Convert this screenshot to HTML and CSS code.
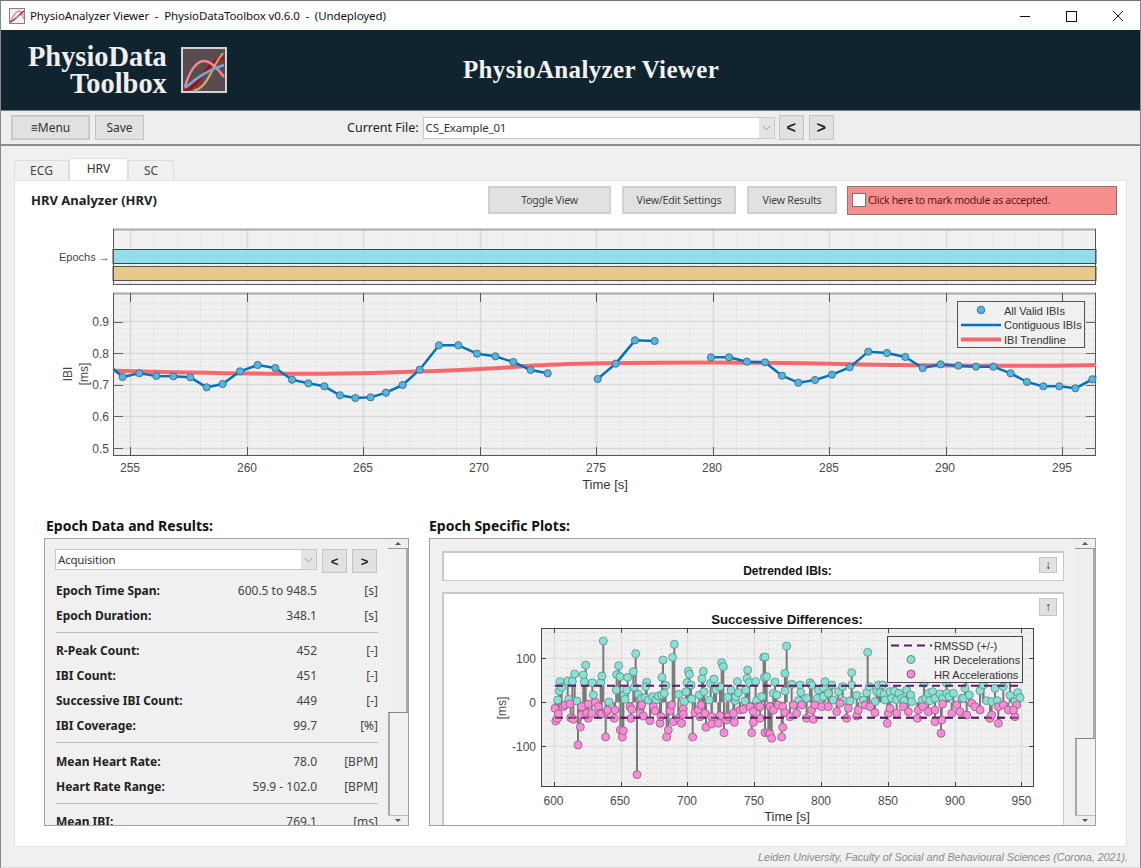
FILE: index.html
```html
<!DOCTYPE html>
<html lang="en">
<head>
<meta charset="utf-8">
<title>PhysioAnalyzer Viewer</title>
<link rel="stylesheet" href="styles.css">
</head>
<body>
<div class="window">
  <div class="titlebar">
    <svg class="appicon" viewBox="0 0 16 16"><rect x=".5" y=".5" width="15" height="15" fill="#f4f0f0" stroke="#8a7f80"/><path d="M1 14C4 8 7 3 10 3s3 5 5 8" fill="none" stroke="#f08a8a" stroke-width="1.3"/><path d="M1 14c5-1 9-8 14-11" fill="none" stroke="#c00" stroke-width="1.3"/><path d="M2 13c4-3 8-6 13-7" fill="none" stroke="#6fa8dc" stroke-width="1.1"/></svg>
    <span class="titletext">PhysioAnalyzer Viewer &nbsp;-&nbsp; PhysioDataToolbox v0.6.0 &nbsp;-&nbsp; (Undeployed)</span>
    <div class="winctrls">
      <svg class="winbtn" viewBox="0 0 46 30"><path d="M17 15.5h10" stroke="#111" fill="none"/></svg>
      <svg class="winbtn" viewBox="0 0 46 30"><rect x="17.5" y="10.5" width="10" height="10" stroke="#111" fill="none"/></svg>
      <svg class="winbtn" viewBox="0 0 46 30"><path d="M18 10l10 10M28 10L18 20" stroke="#111" fill="none"/></svg>
    </div>
  </div>

  <header class="banner">
    <div class="logo">
      <div class="logotext"><span>PhysioData</span><span>Toolbox</span></div>
      <svg class="logoicon" viewBox="0 0 46 46">
        <rect x="1" y="1" width="44" height="44" fill="#5a4b50" stroke="#d2d2d2" stroke-width="2"/>
        <path d="M4 43c12-3 16-14 22-21 5-6 10-10 17-11" fill="none" stroke="#c00000" stroke-width="2.6"/>
        <path d="M12 44c8-1 13-8 18-18 4-9 8-15 12-20" fill="none" stroke="#d9a860" stroke-width="2"/>
        <path d="M4 40C8 25 15 14 23 14c7 0 14 8 20 16" fill="none" stroke="#f28a8a" stroke-width="2.4"/>
        <path d="M4 41c10-9 22-18 39-23" fill="none" stroke="#6fa8dc" stroke-width="2.6"/>
      </svg>
    </div>
    <h1 class="apptitle">PhysioAnalyzer Viewer</h1>
  </header>

  <div class="toolbar">
    <button class="btn btn-menu">≡Menu</button>
    <button class="btn btn-save">Save</button>
    <span class="filelabel">Current File:</span>
    <div class="combo combo-file"><span class="combotext">CS_Example_01</span><span class="comboarrow"><svg viewBox="0 0 10 6"><path d="M1 1l4 4 4-4" fill="none" stroke="#888"/></svg></span></div>
    <button class="btn btn-nav">&lt;</button>
    <button class="btn btn-nav">&gt;</button>
  </div>

  <main class="main">
    <div class="tabs">
      <span class="tab">ECG</span>
      <span class="tab tab-active">HRV</span>
      <span class="tab tab-last">SC</span>
    </div>
    <section class="tabpanel">
      <div class="modulehead">
        <h2 class="moduletitle">HRV Analyzer (HRV)</h2>
        <button class="btn btn-head btn-toggle">Toggle View</button>
        <button class="btn btn-head btn-settings">View/Edit Settings</button>
        <button class="btn btn-head btn-results">View Results</button>
        <label class="accept"><span class="checkbox"></span>Click here to mark module as accepted.</label>
      </div>

      <svg class="mainchart" id="mainchart" viewBox="15 220 1111 280">
        <text class="lbl-small" x="59" y="261">Epochs →</text>
        <g id="ep-grid"></g>
        <rect x="113" y="249.5" width="983" height="14" fill="#8adce9" fill-opacity=".95" stroke="#444"/>
        <rect x="113" y="266.5" width="983" height="14" fill="#e5cb87" stroke="#555"/>
        <path d="M113 229.5H1096" stroke="#aaa" stroke-width="2"/>
        <path d="M113.5 229V285M1095.5 229V285M113 284.5H1096" stroke="#555" fill="none"/>

        <rect x="113" y="293" width="983" height="163" fill="#f0f0f0"/>
        <g id="main-grid"></g>
        <path d="M113 293.5H1096" stroke="#a8a8a8" stroke-width="2"/>
        <path d="M113.5 293V456M1095.5 293V456M113 455.5H1096" stroke="#555" fill="none"/>
        <g id="main-ticks"></g>
        <path id="trend" fill="none" stroke="#f46a6c" stroke-width="4"/>
        <g id="ibi"></g>

        <g class="ticklbl" text-anchor="end">
          <text x="109" y="326">0.9</text><text x="109" y="358">0.8</text><text x="109" y="389">0.7</text><text x="109" y="421">0.6</text><text x="109" y="453">0.5</text>
        </g>
        <g class="ticklbl" text-anchor="middle">
          <text x="130" y="472">255</text><text x="247" y="472">260</text><text x="363" y="472">265</text><text x="479" y="472">270</text><text x="596" y="472">275</text><text x="712" y="472">280</text><text x="829" y="472">285</text><text x="945" y="472">290</text><text x="1062" y="472">295</text>
        </g>
        <text class="axlbl" text-anchor="middle" x="605" y="489">Time [s]</text>
        <text class="ticklbl" text-anchor="middle" transform="translate(72 374) rotate(-90)">IBI</text>
        <text class="ticklbl" text-anchor="middle" transform="translate(88 374) rotate(-90)">[ms]</text>

        <g class="legend">
          <rect x="957.5" y="301.5" width="127" height="46" fill="#f0f0f0" stroke="#555"/>
          <circle cx="981" cy="310" r="3.8" fill="#4fb8e2" stroke="#4d7186"/>
          <path d="M961 325h40" stroke="#0072bd" stroke-width="2.5"/>
          <path d="M961 339.5h40" stroke="#f46a6c" stroke-width="4"/>
          <text x="1004" y="315">All Valid IBIs</text>
          <text x="1004" y="329">Contiguous IBIs</text>
          <text x="1004" y="344">IBI Trendline</text>
        </g>
      </svg>

      <div class="lower">
        <div class="col col-left">
          <h3 class="sectitle">Epoch Data and Results:</h3>
          <div class="scrollbox box-left">
            <div class="scrollcontent content-left">
              <div class="epochctrl">
                <div class="combo combo-epoch"><span class="combotext">Acquisition</span><span class="comboarrow"><svg viewBox="0 0 10 6"><path d="M1 1l4 4 4-4" fill="none" stroke="#888"/></svg></span></div>
                <button class="btn btn-nav btn-small">&lt;</button>
                <button class="btn btn-nav btn-small">&gt;</button>
              </div>
              <div class="group">
                <div class="row"><b>Epoch Time Span:</b><span class="val">600.5 to 948.5</span><span class="unit">[s]</span></div>
                <div class="row"><b>Epoch Duration:</b><span class="val">348.1</span><span class="unit">[s]</span></div>
              </div>
              <div class="group group-wide">
                <div class="row"><b>R-Peak Count:</b><span class="val">452</span><span class="unit">[-]</span></div>
                <div class="row"><b>IBI Count:</b><span class="val">451</span><span class="unit">[-]</span></div>
                <div class="row"><b>Successive IBI Count:</b><span class="val">449</span><span class="unit">[-]</span></div>
                <div class="row"><b>IBI Coverage:</b><span class="val">99.7</span><span class="unit">[%]</span></div>
              </div>
              <div class="group">
                <div class="row"><b>Mean Heart Rate:</b><span class="val">78.0</span><span class="unit">[BPM]</span></div>
                <div class="row"><b>Heart Rate Range:</b><span class="val">59.9 - 102.0</span><span class="unit">[BPM]</span></div>
              </div>
              <div class="group">
                <div class="row"><b>Mean IBI:</b><span class="val">769.1</span><span class="unit">[ms]</span></div>
              </div>
            </div>
            <div class="scrollbar">
              <span class="sb-btn sb-up"></span>
              <span class="sb-thumb thumb-left"></span>
              <span class="sb-track"></span>
              <span class="sb-btn sb-down"></span>
            </div>
          </div>
        </div>

        <div class="col col-right">
          <h3 class="sectitle">Epoch Specific Plots:</h3>
          <div class="scrollbox box-right">
            <div class="scrollcontent content-right">
              <div class="plotpanel panel-collapsed">
                <span class="paneltitle">Detrended IBIs:</span>
                <button class="btn arrowbtn arrow-down">↓</button>
              </div>
              <div class="plotpanel panel-open">
                <button class="btn arrowbtn arrow-up">↑</button>
                <svg class="scatter" viewBox="444 594 620 233">
                  <text class="plottitle" text-anchor="middle" x="787" y="624">Successive Differences:</text>
                  <rect x="541" y="628" width="493" height="159" fill="#f0f0f0"/>
                  <g id="sc-grid"></g>
                  <path d="M541.5 628V787M1033.5 628V787M541 628.5H1034M541 786.5H1034" stroke="#444" fill="none"/>
                  <g id="sc-stems" stroke="#7a7a7a" stroke-width="2"></g>
                  <g id="sc-teal" fill="#86e2d4" stroke="#5f8a84" stroke-width=".8"></g>
                  <path d="M555 685.8H1019M555 717.8H1019" stroke="#5f1a68" stroke-width="2" stroke-dasharray="8 5"/>
                  <g id="sc-pink" fill="#fd8ad8" stroke="#84627a" stroke-width=".8"></g>
                  <path d="M555 717.8H1019" stroke="#5f1a68" stroke-width="2" stroke-dasharray="8 5" opacity=".7"/>
                  <g class="ticklbl" text-anchor="end">
                    <text x="536" y="663">100</text><text x="536" y="707">0</text><text x="536" y="751">-100</text>
                  </g>
                  <g class="ticklbl" text-anchor="middle">
                    <text x="553.5" y="805">600</text><text x="620" y="805">650</text><text x="687" y="805">700</text><text x="754" y="805">750</text><text x="821" y="805">800</text><text x="888" y="805">850</text><text x="955" y="805">900</text><text x="1021.5" y="805">950</text>
                  </g>
                  <text class="axlbl" text-anchor="middle" x="787" y="821">Time [s]</text>
                  <text class="ticklbl" text-anchor="middle" transform="translate(506 708) rotate(-90)">[ms]</text>
                  <g class="legend">
                    <rect x="887.5" y="636.5" width="135" height="46" fill="#f0f0f0" fill-opacity=".88" stroke="#444"/>
                    <path d="M891 645.5h41" stroke="#5f1a68" stroke-width="2" stroke-dasharray="8 5"/>
                    <circle cx="911" cy="659.5" r="4" fill="#86e2d4" stroke="#5f8a84"/>
                    <circle cx="911" cy="674" r="4" fill="#fd8ad8" stroke="#84627a"/>
                    <text x="934" y="649.5">RMSSD (+/-)</text>
                    <text x="934" y="664">HR Decelerations</text>
                    <text x="934" y="679">HR Accelerations</text>
                  </g>
                </svg>
              </div>
            </div>
            <div class="scrollbar">
              <span class="sb-btn sb-up"></span>
              <span class="sb-thumb thumb-right"></span>
              <span class="sb-track"></span>
              <span class="sb-btn sb-down"></span>
            </div>
          </div>
        </div>
      </div>
    </section>
  </main>
  <footer class="footer">Leiden University, Faculty of Social and Behavioural Sciences (Corona, 2021).</footer>
</div>
<script src="plots.js"></script>
</body>
</html>
```
FILE: styles.css
```css
* { box-sizing: border-box; }
html, body { margin: 0; padding: 0; }
body { background: #f0f0f0; font-family: "Noto Sans", "Liberation Sans", sans-serif; color: #222; }
.window { width: 1141px; height: 868px; display: flex; flex-direction: column; overflow: hidden; border-top: 1px solid #777; border-right: 1px solid #888; border-left: 1px solid #888; border-bottom: 1px solid #ddd; background: #f0f0f0; }

.titlebar { height: 29px; flex: none; background: #fff; display: flex; align-items: center; padding-left: 8px; }
.appicon { width: 16px; height: 16px; flex: none; }
.titletext { margin-left: 5px; font-size: 11.5px; letter-spacing: -.1px; color: #111; white-space: nowrap; }
.winctrls { margin-left: auto; display: flex; margin-right: -1px; }
.winbtn { width: 46px; height: 30px; display: block; }

.banner { height: 80px; flex: none; background: #10242f; display: flex; align-items: center; position: relative; }
.logo { display: flex; align-items: center; margin-left: 27px; }
.logotext { display: flex; flex-direction: column; align-items: flex-end; font: bold 28.4px/27px "Liberation Serif", serif; color: #efefef; }
.logoicon { width: 46px; height: 46px; margin-left: 14px; flex: none; }
.apptitle { margin: 0; position: absolute; left: 462px; top: 24px; font: bold 25px/32px "Liberation Serif", serif; color: #f2f2f2; letter-spacing: .35px; }

.toolbar { height: 36px; flex: none; background: #eee; border-top: 1px solid #777; border-bottom: 2px solid #8c8c8c; display: flex; align-items: center; padding: 0 0 0 10px; }
.btn { font-family: inherit; font-size: 12px; color: #333; background: #e1e1e1; border: 1px solid #c4c4c4; padding: 0; display: flex; align-items: center; justify-content: center; flex: none; }
.btn-menu { width: 79px; height: 25px; box-shadow: inset 0 0 0 1px #d0d0d0; }
.btn-save { width: 49px; height: 25px; margin-left: 5px; }
.filelabel { margin-left: 203px; font-size: 12.5px; color: #222; }
.combo { display: flex; background: #fff; border: 1px solid #c8c8c8; font-size: 11.5px; letter-spacing: -.2px; color: #333; flex: none; }
.combo-file { width: 352px; height: 22px; margin-left: 4px; }
.combotext { flex: 1; padding-left: 2px; line-height: 20px; white-space: nowrap; }
.comboarrow { width: 15px; background: #e4e4e4; display: flex; align-items: center; justify-content: center; }
.comboarrow svg { width: 9px; height: 6px; }
.btn-nav { width: 25px; height: 25px; margin-left: 5px; font-family: "Liberation Sans", sans-serif; font-weight: bold; font-size: 16px; color: #222; }
.combo-file + .btn-nav { margin-left: 4px; }

.main { flex: 1; min-height: 0; padding: 12px 13px 0 13px; display: flex; flex-direction: column; }
.tabs { display: flex; align-items: flex-end; height: 22px; flex: none; }
.tab { width: 55px; height: 20px; background: #f0f0f0; border: 1px solid #ddd; border-bottom: 0; font-size: 12px; color: #444; display: flex; align-items: center; justify-content: center; }
.tab-active { width: 59px; height: 22px; background: #fff; border-bottom: 0; color: #333; padding-bottom: 2px; }
.tab-last { width: 46px; }
.tabpanel { flex: 1; min-height: 0; background: #fff; border: 1px solid #e2e2e2; display: flex; flex-direction: column; }

.modulehead { height: 39px; flex: none; display: flex; align-items: center; padding: 0 9px 1px 16px; }
.moduletitle { margin: 0; font-size: 13px; font-weight: 700; color: #222; }
.btn-head { height: 28px; font-size: 10.5px; letter-spacing: -.2px; color: #444; border-width: 2px; border-color: #d2d2d2; }
.btn-toggle { width: 123px; margin-left: auto; }
.btn-settings { width: 114px; margin-left: 11px; }
.btn-results { width: 90px; margin-left: 11px; }
.accept { width: 270px; height: 29px; margin-left: 10px; background: #f68e8e; border: 1px solid #8a7474; display: flex; align-items: center; padding-left: 4px; font-size: 10.5px; letter-spacing: -.3px; color: #5c1515; white-space: nowrap; }
.checkbox { width: 14px; height: 14px; background: #fff; border: 1px solid #777; margin-right: 2px; flex: none; }

.mainchart { display: block; width: 1111px; height: 280px; flex: none; }
.lower { display: flex; padding: 0 0 0 29px; flex: none; }
.col { display: flex; flex-direction: column; flex: none; }
.col-left { width: 385px; }
.col-right { width: 667px; }
.sectitle { margin: 16px 0 0 2px; height: 22px; font-size: 14px; line-height: 20px; font-weight: 700; color: #111; }
.scrollbox { height: 288px; border: 1px solid #a0a0a0; background: #f0f0f0; display: flex; overflow: hidden; }
.box-left { width: 365px; }
.box-right { width: 667px; margin-left: 0; }
.col-right .sectitle { margin-left: 0; }
.scrollcontent { flex: 1; min-width: 0; overflow: hidden; }
.content-left { padding: 10px 10px 0 11px; }
.epochctrl { display: flex; align-items: flex-start; height: 29px; margin-left: -1px; }
.combo-epoch { width: 262px; height: 21px; }
.btn-small { font-size: 13px; height: 24px; }
.epochctrl .btn-small:first-of-type { margin-left: 5px; }
.group { border-bottom: 1px solid #bcbcbc; padding-bottom: 4px; margin-bottom: 5px; }
.group-wide { margin-bottom: 6px; }
.group:last-child { border-bottom: 0; }
.row { display: flex; height: 25px; align-items: center; font-size: 12px; color: #444; }
.row b { font-weight: 700; color: #222; white-space: nowrap; }
.val { margin-left: auto; white-space: nowrap; }
.unit { width: 61px; text-align: right; flex: none; }

.scrollbar { width: 20px; flex: none; display: flex; flex-direction: column; }
.sb-btn { height: 10px; flex: none; border-bottom: 1px solid #999; position: relative; background: #efefef; }
.sb-down { border-bottom: 0; border-top: 1px solid #bbb; }
.sb-btn::after { content: ""; position: absolute; left: 7px; top: 3px; border: 3px solid transparent; border-top: 0; border-bottom: 3px solid #555; }
.sb-down::after { border-bottom: 0; border-top: 3px solid #555; }
.sb-thumb { flex: none; border-right: 2px solid #aaa; border-bottom: 1px solid #888; background: #efefef; }
.sb-track { flex: 1; border-left: 2px solid #a8a8a8; background: #f1f1f1; }
.thumb-left { height: 164px; }
.thumb-right { height: 190px; }

.content-right { padding: 12px 12px 0 12px; }
.plotpanel { background: #fff; border: 2px solid #c8c8c8; border-right-width: 1px; border-bottom-width: 1px; width: 622px; position: relative; }
.panel-collapsed { height: 30px; margin-bottom: 11px; text-align: center; }
.panel-open { height: 260px; }
.paneltitle { position: absolute; left: 68px; right: 0; top: 11px; font: bold 12px/14px "Liberation Sans", sans-serif; color: #111; }
.arrowbtn { position: absolute; right: 6px; width: 18px; font-size: 12px; font-family: "Liberation Sans", sans-serif; color: #222; }
.arrow-down { top: 4px; height: 16px; }
.arrow-up { top: 4px; height: 18px; }
.scatter { display: block; width: 620px; height: 233px; }

.footer { flex: none; height: 20px; font: italic 10.7px/21px "Liberation Sans", sans-serif; color: #8b8b8b; text-align: right; padding-right: 12px; }

svg text { font-family: "Liberation Sans", sans-serif; }
.ticklbl text, text.ticklbl { font-size: 12px; fill: #4a4a4a; }
.axlbl { font-size: 13px; fill: #333; }
.lbl-small { font-size: 11px; fill: #444; }
.legend text { font-size: 11px; fill: #333; }
.plottitle { font-size: 13.2px; font-weight: bold; fill: #111; }
```
FILE: plots.js
```js
const NS = "http://www.w3.org/2000/svg";
function el(parent, tag, attrs) {
  const e = document.createElementNS(NS, tag);
  for (const k in attrs) e.setAttribute(k, attrs[k]);
  document.getElementById(parent).appendChild(e);
}
function line(parent, x1, y1, x2, y2, stroke, extra) {
  el(parent, "line", Object.assign({ x1, y1, x2, y2, stroke }, extra || {}));
}
const DOT = { "stroke-dasharray": "1 3" };
const MINOR = "#d0d0d0";
const SNAP = v => Math.round(v) + 0.5;

/* ---------- epoch strip ---------- */
const xs = s => 130 + (s - 255) * 23.3;
el("ep-grid", "rect", { x: 113, y: 229, width: 983, height: 56, fill: "#f0f0f0" });
for (let s = 255; s <= 296; s++) {
  const x = SNAP(xs(s));
  if (s % 5 === 0) line("ep-grid", x, 229, x, 285, "#d9d9d9", { "stroke-width": 1.5 });
  else line("ep-grid", x, 229, x, 285, MINOR, DOT);
}

/* ---------- main IBI plot ---------- */
const yv = v => 353 + (0.8 - v) * 315;
for (let v = 0.48; v <= 0.98; v += 0.02) {
  const y = SNAP(yv(v));
  const major = Math.abs(v * 10 - Math.round(v * 10)) < 0.01;
  if (major) line("main-grid", 113, y, 1096, y, "#dadada", { "stroke-width": 1.5 });
  else line("main-grid", 113, y, 1096, y, MINOR, DOT);
}
for (let s = 255; s <= 296; s++) {
  const x = SNAP(xs(s));
  if (s % 5 === 0) {
    line("main-grid", x, 293, x, 456, "#d9d9d9", { "stroke-width": 1.5 });
    line("main-ticks", x, 293, x, 302, "#555");
    line("main-ticks", x, 447, x, 456, "#555");
  } else line("main-grid", x, 293, x, 456, MINOR, DOT);
}
for (let v = 0.5; v <= 0.95; v += 0.1) {
  const y = SNAP(yv(v));
  line("main-ticks", 113, y, 123, y, "#666");
  line("main-ticks", 1086, y, 1096, y, "#666");
}
document.getElementById("trend").setAttribute("d",
  "M113 370.7C200 373 300 375 372 373S480 370 520 366.5 640 362.5 711 362.5 860 364.5 900 365 1040 366.5 1096 365");

const z3 = p => [40 + p[0] / 3, 220 + p[1] / 3];
const z4 = p => [420 + p[0] / 3, 280 + p[1] / 3];
const z5 = p => [800 + p[0] / 3, 280 + p[1] / 3];
const segA = [[220, 447], [248, 471], [298, 460], [349, 468], [400, 469], [451, 472], [500, 502], [548, 492], [600, 454], [653, 435], [706, 444], [756, 479], [805, 490], [853, 499], [900, 526], [946, 534], [992, 532], [1038, 518], [1088, 495], [1139, 449]].map(z3)
  .concat([[57, 196], [115, 196], [171, 221], [226, 229], [280, 246], [332, 270], [383, 280]].map(z4));
const segB = [[533, 297], [587, 251], [645, 181], [704, 183]].map(z4);
const segC = [[873, 232], [927, 232], [981, 245], [1035, 247], [1086, 287], [1135, 308]].map(z4)
  .concat([[45, 300], [96, 284], [149, 262], [205, 215], [261, 219], [316, 231], [368, 264], [422, 253], [475, 257], [528, 260], [580, 260], [632, 280], [681, 306], [730, 319], [778, 319], [826, 325], [877, 298]].map(z5));
[segA, segB, segC].forEach(seg => {
  const pts = seg.slice();
  if (seg === segC) pts.push([1096, 376]);
  el("ibi", "polyline", { points: pts.map(p => p.join(",")).join(" "), fill: "none", stroke: "#0072bd", "stroke-width": 2.5, "stroke-linejoin": "round" });
});
[segA, segB, segC].forEach(seg => seg.forEach((p, i) => {
  if (seg === segA && i === 0) return;
  el("ibi", "circle", { cx: p[0], cy: p[1], r: 3.6, fill: "#4fb8e2", stroke: "#4d7186", "stroke-width": 1 });
}));

/* ---------- successive differences ---------- */
const sx = t => 553.7 + (t - 600) * 1.3365;
const sy = v => 702.3 - v * 0.4415;
for (let t = 600; t <= 950; t += 10) {
  if (t % 50 === 0) continue;
  line("sc-grid", SNAP(sx(t)), 628, SNAP(sx(t)), 787, MINOR, DOT);
}
for (let v = -180; v <= 160; v += 20) {
  if (v % 100 === 0) continue;
  line("sc-grid", 541, SNAP(sy(v)), 1034, SNAP(sy(v)), MINOR, DOT);
}
for (let t = 600; t <= 950; t += 50) {
  const x = SNAP(sx(t));
  line("sc-grid", x, 628, x, 787, "#dedede", { "stroke-width": 1.5 });
  line("sc-grid", x, 628, x, 633, "#444");
  line("sc-grid", x, 782, x, 787, "#444");
}
[-100, 0, 100].forEach(v => {
  const y = SNAP(sy(v));
  line("sc-grid", 541, y, 1034, y, "#dedede", { "stroke-width": 1.5 });
  line("sc-grid", 541, y, 546, y, "#444");
  line("sc-grid", 1029, y, 1034, y, "#444");
});

const z7 = p => [425 + p[0] / 3, 510 + p[1] / 3];
const z8 = p => [760 + p[0] / 3, 510 + p[1] / 3];
const teal = [[398,570],[405,515],[403,543],[410,532],[428,513],[431,568],[442,514],[449,492],[456,573],[475,495],[482,465],[478,516],[502,518],[505,555],[527,518],[531,498],[535,393],[552,576],[574,540],[575,494],[581,467],[585,500],[597,555],[600,568],[605,540],[608,502],[625,485],[628,532],[632,431],[640,553],[650,565],[660,563],[665,517],[662,530],[670,570],[683,560],[693,570],[700,558],[710,555],[711,502],[714,450],[718,550],[722,526],[743,442],[748,403],[761,553],[778,575],[783,545],[786,518],[790,484],[793,493],[798,525],[800,567],[823,555],[831,506],[835,484],[837,545],[853,570],[857,520],[867,507],[873,540],[885,530],[890,458],[895,470],[908,562],[918,540],[930,572],[932,560],[937,515],[940,548],[960,573],[962,540],[966,505],[968,480],[973,518],[992,515],[995,572],[1012,560],[1016,442],[1018,502]].map(z7)
 .concat([[15,441],[20,500],[5,560],[45,516],[40,550],[50,555],[75,490],[80,408],[75,543],[95,523],[115,572],[120,525],[122,547],[140,565],[150,518],[155,525],[172,565],[175,540],[190,533],[195,515],[190,560],[205,550],[215,525],[220,570],[235,545],[248,530],[250,572],[270,573],[275,488],[275,525],[290,556],[310,570],[320,548],[323,427],[328,530],[345,575],[350,545],[355,525],[360,548],[368,525],[372,552],[375,570],[390,545],[395,565],[403,543],[410,570],[417,550],[425,565],[432,572],[440,540],[452,555],[455,575],[487,570],[492,520],[497,565],[505,550],[510,572],[518,545],[525,565],[540,552],[548,565],[560,520],[560,550],[567,560],[580,550],[605,565],[610,565],[615,535],[618,482],[628,555],[660,542],[670,487],[670,525],[680,572],[695,575],[705,535],[712,572],[730,530],[750,487],[750,556],[765,575],[773,548],[780,563]].map(z8));
const pink = [[390,595],[392,633],[397,625],[400,612],[415,590],[420,585],[435,582],[437,623],[445,628],[459,705],[466,651],[470,590],[470,615],[485,610],[490,582],[490,625],[500,610],[511,577],[520,590],[525,610],[530,612],[542,681],[545,605],[548,600],[568,625],[570,600],[586,660],[592,681],[595,662],[615,590],[620,598],[618,625],[636,794],[645,610],[655,618],[650,585],[675,632],[685,590],[690,603],[705,640],[708,620],[725,681],[730,660],[735,603],[740,585],[745,635],[760,625],[770,640],[775,597],[775,613],[803,681],[810,608],[820,600],[825,620],[828,585],[840,610],[843,652],[860,620],[860,642],[880,640],[885,617],[897,668],[905,630],[910,620],[925,610],[928,637],[945,600],[955,598],[975,590],[980,668],[985,637],[985,605],[1000,590],[1005,625],[1020,668]].map(z7)
 .concat([[0,590],[25,668],[30,672],[35,685],[68,652],[65,681],[30,590],[40,600],[55,585],[68,590],[75,608],[90,620],[100,585],[110,610],[125,585],[140,625],[160,628],[155,600],[165,585],[185,590],[205,590],[230,605],[260,625],[240,580],[265,595],[290,618],[295,600],[315,585],[330,590],[345,608],[382,640],[385,610],[390,595],[410,610],[430,590],[445,605],[472,625],[475,600],[488,590],[505,605],[525,635],[525,600],[543,670],[545,630],[548,582],[575,610],[590,585],[600,605],[620,615],[635,580],[645,590],[660,600],[690,625],[695,615],[715,640],[715,590],[730,585],[745,600],[765,620],[770,585],[760,600]].map(z8));
const zero = sy(0);
teal.concat(pink).forEach(p => line("sc-stems", p[0], zero, p[0], p[1], "#7a7a7a"));
teal.forEach(p => el("sc-teal", "circle", { cx: p[0], cy: p[1], r: 4 }));
pink.forEach(p => el("sc-pink", "circle", { cx: p[0], cy: p[1], r: 4 }));
```
